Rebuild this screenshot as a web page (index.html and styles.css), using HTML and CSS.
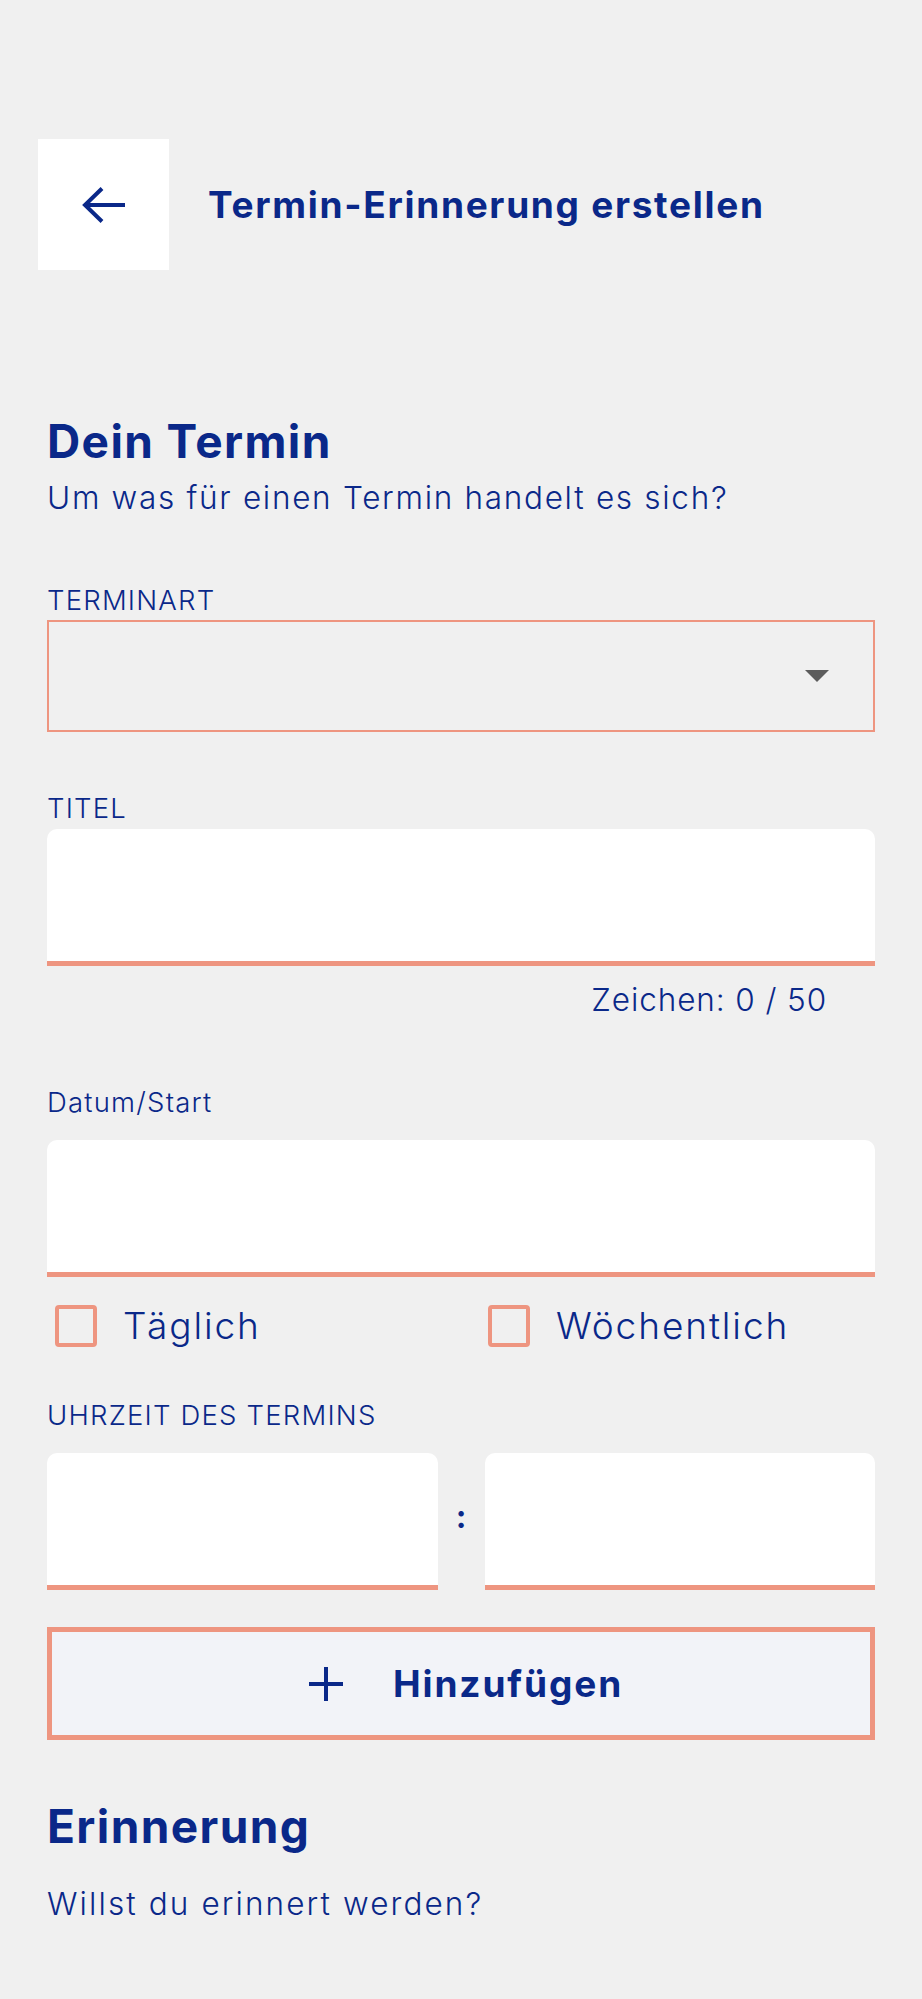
FILE: index.html
```html
<!DOCTYPE html>
<html lang="de">
<head>
<meta charset="utf-8">
<title>Termin-Erinnerung erstellen</title>
<link rel="stylesheet" href="styles.css">
</head>
<body>
<div class="page">
  <header class="header">
    <button class="back" aria-label="Zurück">
      <svg width="44" height="36" viewBox="0 0 44 36"><path d="M20 1.5 L3 18 L20 34.5 M3 18 H43" fill="none" stroke="#0a2889" stroke-width="4"/></svg>
    </button>
    <h1 class="title">Termin-Erinnerung erstellen</h1>
  </header>

  <section class="intro">
    <h2 class="heading">Dein Termin</h2>
    <p class="lead">Um was für einen Termin handelt es sich?</p>
  </section>

  <div class="field field-type">
    <div class="label">TERMINART</div>
    <div class="select"><span class="caret"></span></div>
  </div>

  <div class="field field-title">
    <div class="label">TITEL</div>
    <div class="input"></div>
    <div class="counter">Zeichen: 0 / 50</div>
  </div>

  <div class="field field-date">
    <div class="label">Datum/Start</div>
    <div class="input"></div>
  </div>

  <div class="checks">
    <label class="check"><span class="box"></span><span class="check-text">Täglich</span></label>
    <label class="check"><span class="box"></span><span class="check-text">Wöchentlich</span></label>
  </div>

  <div class="field field-time">
    <div class="label">UHRZEIT DES TERMINS</div>
    <div class="time-row">
      <div class="input"></div>
      <div class="colon">:</div>
      <div class="input"></div>
    </div>
  </div>

  <button class="add">
    <svg width="34" height="34" viewBox="0 0 34 34"><path d="M17 0 V34 M0 17 H34" fill="none" stroke="#0a2889" stroke-width="4"/></svg>
    <span class="add-text">Hinzufügen</span>
  </button>

  <section class="reminder">
    <h2 class="heading">Erinnerung</h2>
    <p class="lead lead-reminder">Willst du erinnert werden?</p>
  </section>
</div>
</body>
</html>
```

FILE: styles.css
```css
* { box-sizing: border-box; }
html, body { margin: 0; padding: 0; }
body {
  background: #f0f0f0;
  font-family: "Inter", "Noto Sans", sans-serif;
  color: #0a2889;
}
.page {
  padding: 139px 47px 0 47px;
}
.header {
  display: flex;
  align-items: center;
  margin-left: -9px;
}
.back {
  width: 131px;
  height: 131px;
  background: #fff;
  border: 0;
  padding: 0;
  display: flex;
  align-items: center;
  justify-content: center;
  flex: none;
}
.title {
  margin: 0 0 0 39px;
  font-size: 37px;
  font-weight: 700;
  line-height: 40px;
  letter-spacing: 1.7px;
}
.intro { margin-top: 143px; }
.heading {
  margin: 0;
  font-size: 46px;
  font-weight: 700;
  line-height: 56px;
  letter-spacing: 1.4px;
}
.lead {
  margin: 7px 0 0 0;
  font-size: 31.5px;
  font-weight: 300;
  line-height: 44px;
  letter-spacing: 1.7px;
}
.field { display: flex; flex-direction: column; }
.label {
  font-size: 27.5px;
  line-height: 32px;
  font-weight: 300;
  letter-spacing: 1.2px;
}
.field-type { margin-top: 64px; }
.select {
  margin-top: 4px;
  height: 112px;
  border: 2px solid #ee9580;
  position: relative;
  display: flex;
  align-items: center;
  justify-content: flex-end;
  padding-right: 44px;
}
.caret {
  width: 0; height: 0;
  border-left: 12px solid transparent;
  border-right: 12px solid transparent;
  border-top: 12px solid #5c5c5c;
}
.field-title { margin-top: 60px; }
.input {
  margin-top: 5px;
  height: 137px;
  background: #fff;
  border-radius: 10px 10px 0 0;
  border-bottom: 5px solid #ee9580;
}
.counter {
  align-self: flex-end;
  margin-right: 48px;
  font-size: 31.5px;
  font-weight: 300;
  line-height: 44px;
  margin-top: 12px;
  letter-spacing: 0.9px;
}
.field-date { margin-top: 64px; }
.field-date .input { margin-top: 22px; }
.checks {
  display: grid;
  grid-template-columns: 433px 1fr;
  margin-top: 27px;
}
.check { display: flex; align-items: center; }
.box {
  width: 42px; height: 42px;
  margin-left: 8px;
  border: 4.5px solid #ee9580;
  border-radius: 4px;
  flex: none;
}
.check-text {
  margin-left: 26px;
  font-size: 37px;
  font-weight: 300;
  line-height: 44px;
  letter-spacing: 1.9px;
}
.field-time { margin-top: 51px; }
.time-row {
  display: grid;
  grid-template-columns: 1fr 47px 1fr;
  margin-top: 22px;
}
.time-row .input { margin-top: 0; }
.colon {
  font-weight: 700;
  font-size: 32px;
  display: flex;
  align-items: center;
  justify-content: center;
  padding-bottom: 10px;
}
.add {
  margin-top: 37px;
  width: 100%;
  height: 113px;
  background: #f2f3f8;
  border: 5px solid #ee9580;
  display: flex;
  align-items: center;
  justify-content: center;
  gap: 50px;
  font-family: inherit;
  color: inherit;
  padding: 0 0 0 10px;
}
.add-text {
  font-size: 37px;
  font-weight: 700;
  letter-spacing: 1.9px;
}
.reminder { margin-top: 58px; }
.lead-reminder { margin-top: 28px; letter-spacing: 2.1px; }
```
